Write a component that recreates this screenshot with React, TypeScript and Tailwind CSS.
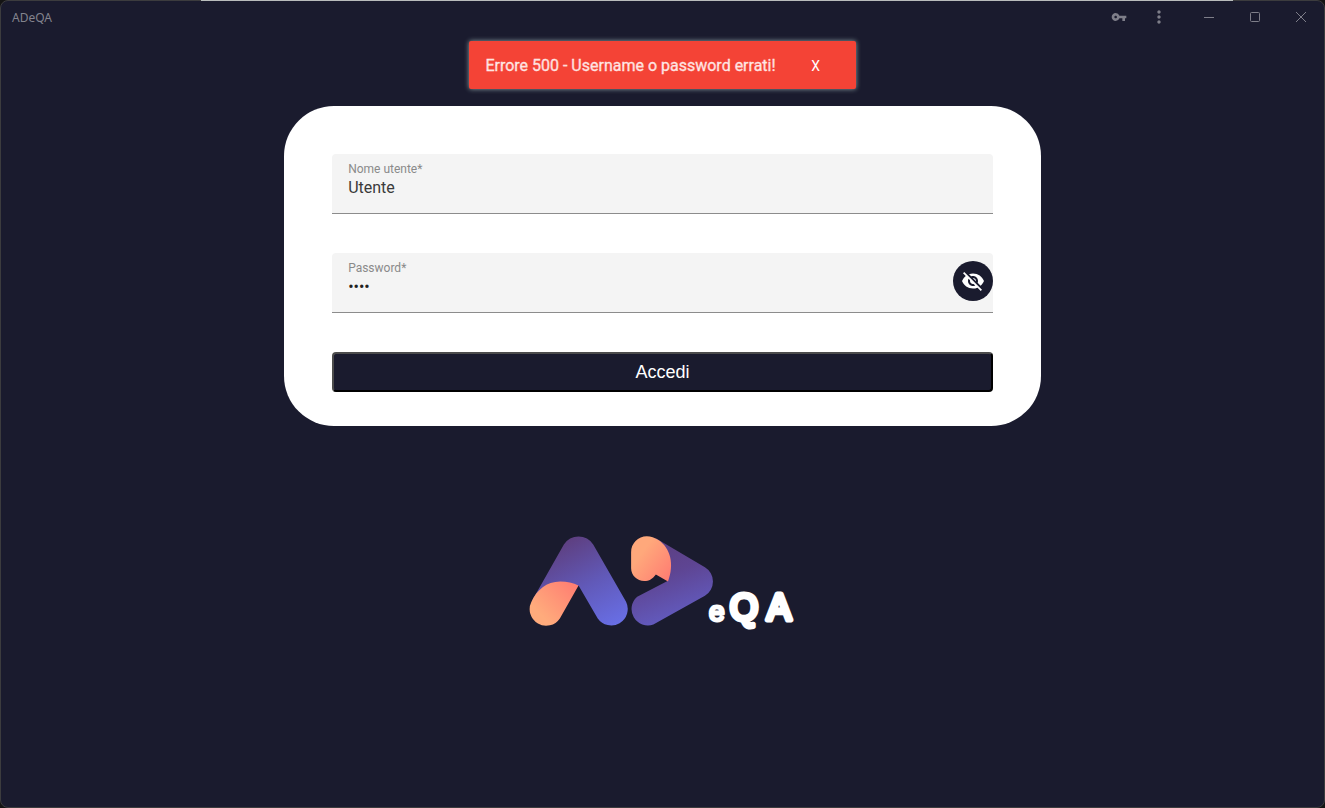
import { useState } from "react";
import { MdMoreVert, MdVisibility, MdVisibilityOff, MdVpnKey } from "react-icons/md";

function TitleBar() {
  const control = "flex h-8 items-center justify-center text-[#7e7e89]";
  return (
    <header className="flex h-8 items-center justify-between pl-[11px]">
      <span className="pt-0.5 font-['Noto_Sans','Open_Sans',sans-serif] text-xs text-[#83838d]">ADeQA</span>
      <div className="flex">
        <button type="button" aria-label="Password" className={`${control} w-10`}>
          <MdVpnKey size={16} />
        </button>
        <button type="button" aria-label="Menu" className={`${control} w-10`}>
          <MdMoreVert size={20} />
        </button>
        <div className="flex pl-[7px]">
          <button type="button" aria-label="Riduci" className={`${control} w-[46px]`}>
            <svg width="10" height="10" stroke="currentColor" aria-hidden="true">
              <path d="M0 5.5h10" />
            </svg>
          </button>
          <button type="button" aria-label="Ingrandisci" className={`${control} w-[46px]`}>
            <svg width="10" height="10" fill="none" stroke="currentColor" aria-hidden="true">
              <rect x="0.5" y="0.5" width="9" height="9" rx="1" />
            </svg>
          </button>
          <button type="button" aria-label="Chiudi" className={`${control} w-[46px]`}>
            <svg width="10" height="10" stroke="currentColor" aria-hidden="true">
              <path d="M0 0l10 10M10 0L0 10" />
            </svg>
          </button>
        </div>
      </div>
    </header>
  );
}

function Logo() {
  return (
    <div className="flex items-end">
      <svg width="184" height="92" viewBox="10 9 182 91" role="img" aria-label="AD">
        <defs>
          <linearGradient id="peak" gradientUnits="userSpaceOnUse" x1="50" y1="14" x2="94" y2="98">
            <stop offset="0" stopColor="#5e4082" />
            <stop offset="0.5" stopColor="#6159b8" />
            <stop offset="1" stopColor="#686ee4" />
          </linearGradient>
          <linearGradient id="arrow" gradientUnits="userSpaceOnUse" x1="140" y1="16" x2="166" y2="84">
            <stop offset="0" stopColor="#5c3f82" />
            <stop offset="0.45" stopColor="#5e4593" />
            <stop offset="1" stopColor="#6259bb" />
          </linearGradient>
          <linearGradient id="leafLeft" gradientUnits="userSpaceOnUse" x1="53" y1="58" x2="22" y2="88">
            <stop offset="0" stopColor="#ff8072" />
            <stop offset="1" stopColor="#ffab7c" />
          </linearGradient>
          <linearGradient id="leafRight" gradientUnits="userSpaceOnUse" x1="152" y1="48" x2="122" y2="26">
            <stop offset="0" stopColor="#ff7d72" />
            <stop offset="1" stopColor="#ffa87b" />
          </linearGradient>
        </defs>
        <path
          d="M13 74L44.500 18.500A17 17 0 0 1 73.500 18.500L106 75A16.300 16.300 0 0 1 78 91.500L59 59L30 70Z"
          fill="url(#peak)"
        />
        <path
          d="M59 59L40.500 91.500A16.300 16.300 0 0 1 12.300 75.300C18 63 27 55.300 41 55Q51 55 59 59Z"
          fill="url(#leafLeft)"
        />
        <path
          d="M135 12L184 41A16.300 16.300 0 0 1 184 69L133 97.500A16.200 16.200 0 0 1 117 70L147 54.500Z"
          fill="url(#arrow)"
        />
        <path
          d="M111 26A15.500 15.500 0 0 1 126.500 10.200Q132.500 10.200 138 14C150 22 154 38 147.500 55L135.500 48C132 52.500 129 54.600 124 54.600C117 54.600 111 49 111 42Z"
          fill="url(#leafRight)"
        />
      </svg>
      <svg width="87" height="44" viewBox="0 0 87 44" overflow="visible" role="img" aria-label="eQA" className="-ml-1">
        <g
          fill="white"
          stroke="white"
          strokeLinejoin="round"
          className="font-['Liberation_Sans',sans-serif]"
        >
          <text x="0" y="38" fontSize="28" strokeWidth="3">e</text>
          <text x="21" y="37" fontSize="36" strokeWidth="5">Q</text>
          <text x="58" y="37" fontSize="36" strokeWidth="5">A</text>
        </g>
      </svg>
    </div>
  );
}

export default function App() {
  const [error, setError] = useState("Errore 500 - Username o password errati!");
  const [visible, setVisible] = useState(false);

  return (
    <div className="min-h-screen bg-[#141414] font-['Roboto',sans-serif]">
      <div className="relative min-h-screen rounded-lg border border-[#3c3c3e] bg-[#1a1b2e]">
        <div className="absolute -top-px right-[91px] left-[200px] h-px bg-[#b9bdbc]" />
        <TitleBar />

        <main className="flex flex-col items-center pt-2">
          <div className="flex h-12 items-center">
            {error && (
              <div
                role="alert"
                className="flex h-12 items-center rounded-xs bg-[#f44336] pt-0.5 pr-6 pl-4 text-white shadow-[0_0_5px_#8fa3a6]"
              >
                <span className="pr-6 text-base text-white/80 [-webkit-text-stroke:0.3px]">{error}</span>
                <button type="button" aria-label="Chiudi avviso" onClick={() => setError("")} className="h-8 w-8 text-sm">
                  X
                </button>
              </div>
            )}
          </div>

          <form
            onSubmit={(event) => event.preventDefault()}
            className="mt-[17px] flex w-[57.2%] flex-col rounded-[50px] bg-white px-12 pt-12 pb-[34px]"
          >
            <div className="mb-[39px] flex h-[60px] flex-col rounded-t border-b border-[#8c8c8c] bg-[#f4f4f4] px-4 pt-[7px]">
              <label htmlFor="username" className="text-xs leading-4 text-[#8a8a8a]">
                Nome utente*
              </label>
              <input
                id="username"
                type="text"
                required
                defaultValue="Utente"
                className="h-[21px] w-full bg-transparent text-base text-[#3a3a3a] outline-none"
              />
            </div>

            <div className="mb-[39px] flex h-[60px] items-start rounded-t border-b border-[#8c8c8c] bg-[#f4f4f4] pl-4">
              <div className="flex grow flex-col pt-[7px]">
                <label htmlFor="password" className="text-xs leading-4 text-[#8a8a8a]">
                  Password*
                </label>
                <input
                  id="password"
                  type={visible ? "text" : "password"}
                  required
                  defaultValue="user"
                  className="h-[21px] w-full bg-transparent text-base text-[#212121] outline-none"
                />
              </div>
              <button
                type="button"
                aria-label="Mostra password"
                onClick={() => setVisible(!visible)}
                className="mt-2 flex size-10 items-center justify-center rounded-full bg-[#1a1b2e] text-white"
              >
                {visible ? <MdVisibility size={24} /> : <MdVisibilityOff size={24} />}
              </button>
            </div>

            <button
              type="submit"
              className="h-10 rounded border-2 border-t-[#4c4c4c] border-r-black border-b-black border-l-[#4c4c4c] bg-[#1a1b2e] font-['Liberation_Sans',sans-serif] text-lg leading-6 text-white"
            >
              Accedi
            </button>
          </form>

          <div className="mt-[109px]">
            <Logo />
          </div>
        </main>
      </div>
    </div>
  );
}
